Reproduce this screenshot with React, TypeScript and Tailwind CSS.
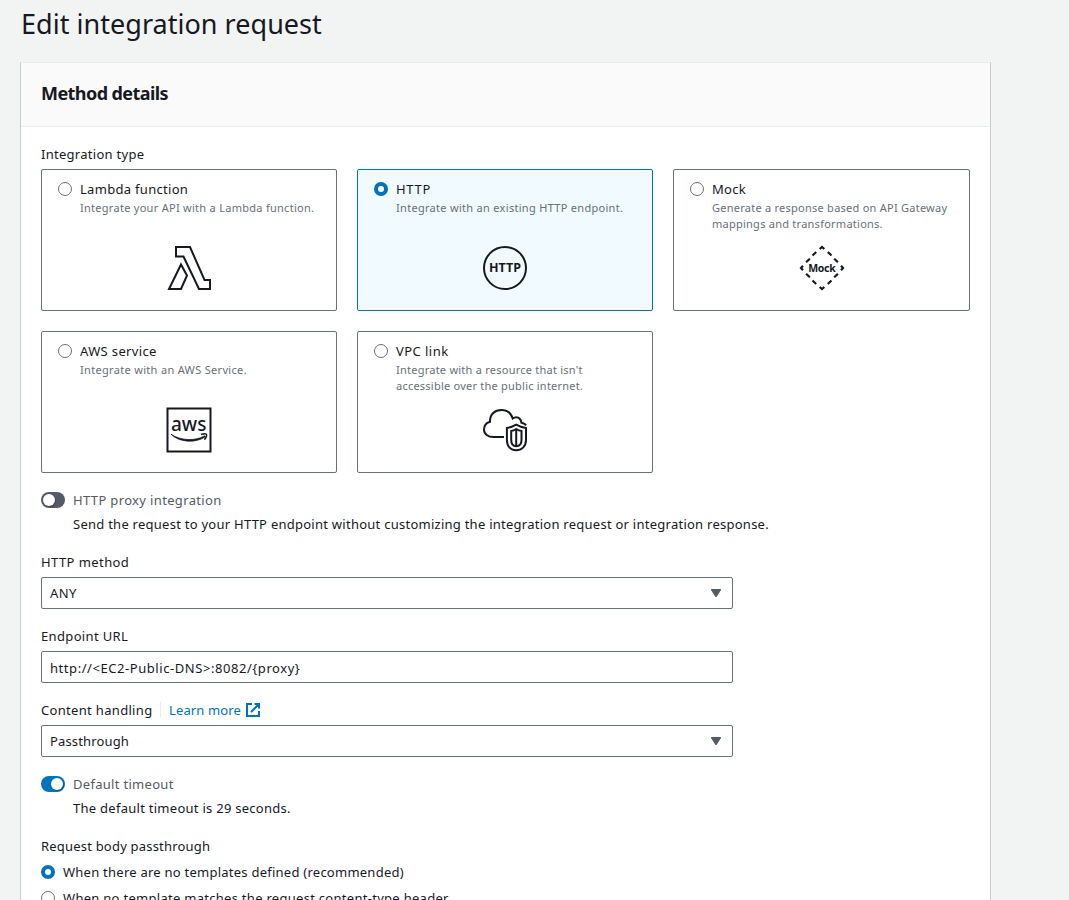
import type { ReactNode } from 'react';

function Radio({ checked = false }: { checked?: boolean }) {
  return (
    <svg className="size-[14px] shrink-0" viewBox="0 0 14 14">
      {checked ? (
        <>
          <circle cx="7" cy="7" r="7" fill="#0073bb" />
          <circle cx="7" cy="7" r="3" fill="#fff" />
        </>
      ) : (
        <circle cx="7" cy="7" r="6.5" fill="#fff" stroke="#687078" />
      )}
    </svg>
  );
}

function Toggle({ on = false }: { on?: boolean }) {
  return (
    <span
      className={`flex h-4 w-6 shrink-0 items-center rounded-full ${
        on ? 'justify-end bg-[#0073bb] pr-[2px]' : 'bg-[#545b64] pl-[2px]'
      }`}
    >
      <span className="size-3 rounded-full bg-white shadow-[1px_1px_1px_rgba(0,0,0,0.25)]" />
    </span>
  );
}

type CardProps = {
  title: string;
  titleClass: string;
  lines: { text: string; className: string }[];
  selected?: boolean;
  children: ReactNode;
};

function Card({ title, titleClass, lines, selected = false, children }: CardProps) {
  return (
    <label
      className={`relative flex h-[142px] flex-col rounded-[2px] border px-4 pt-2 ${
        selected ? 'border-[#0073bb] bg-[#f1faff]' : 'border-[#687078] bg-white'
      }`}
    >
      <span className="flex h-[22px] items-center gap-2">
        <Radio checked={selected} />
        <span className={`whitespace-nowrap text-[13px] ${titleClass}`}>{title}</span>
      </span>
      <span className="flex flex-col pl-[22px] text-[11px] leading-4 text-[#687078]">
        {lines.map((line) => (
          <span key={line.text} className={`whitespace-nowrap ${line.className}`}>
            {line.text}
          </span>
        ))}
      </span>
      <span className="absolute inset-x-0 top-[74px] flex justify-center">{children}</span>
    </label>
  );
}

function LambdaIcon() {
  return (
    <svg className="h-12 w-12" viewBox="0 0 48 48" fill="none" stroke="#16191f" strokeWidth="2">
      <path d="M11 3h14l14.500 33H45v9H34L18.500 12.500H11z" />
      <path d="M16 20.500 4 45h12l6-13.500z" />
    </svg>
  );
}

function HttpIcon() {
  return (
    <svg className="h-12 w-12" viewBox="0 0 48 48">
      <circle cx="24" cy="24" r="21" fill="none" stroke="#16191f" strokeWidth="2" />
      <text x="24" y="28.200" textAnchor="middle" fontSize="11.500" fontWeight="700" fill="#16191f" textLength="32" lengthAdjust="spacingAndGlyphs">
        HTTP
      </text>
    </svg>
  );
}

function MockIcon() {
  return (
    <svg className="h-12 w-12" viewBox="0 0 48 48" fill="none" stroke="#16191f" strokeWidth="2.200">
      <path d="m21.700 5 2.300-2 2.300 2M21.700 43l2.300 2 2.300-2M5 21.700 3 24l2 2.300M43 21.700l2 2.300-2 2.300" />
      <path d="m18.200 8-3.700 3.500M11.800 14.700l-3.700 3.500M29.800 8l3.700 3.500M36.200 14.700l3.700 3.500M8.100 29.800l3.700 3.500M14.500 36.500l3.700 3.500M39.900 29.800l-3.700 3.500M33.500 36.500 29.800 40" />
      <text x="24" y="28" textAnchor="middle" fontSize="10.500" fontWeight="700" fill="#16191f" stroke="none" textLength="27.500">
        Mock
      </text>
    </svg>
  );
}

function AwsIcon() {
  return (
    <svg className="h-12 w-12" viewBox="0 0 48 48" fill="none" stroke="#16191f">
      <path d="M2.500 2.500h43v43h-43z" strokeWidth="2" />
      <text x="23.700" y="24.800" textAnchor="middle" fontSize="20.500" fontWeight="500" fill="#16191f" stroke="none" textLength="35.500" lengthAdjust="spacingAndGlyphs">
        aws
      </text>
      <path d="M6 28.200c9 6.500 25 7.200 33.500 1.600l.8 1C31 37.500 14 36.500 6 28.200z" fill="#16191f" strokeWidth=".7" />
      <path d="M36 28.500c2.500-.9 4.700-.9 5.400-.3.500 1.200-.5 3.700-2 5.500" strokeWidth="1.500" />
    </svg>
  );
}

function VpcIcon() {
  return (
    <svg className="h-12 w-12" viewBox="0 0 48 48" fill="none" stroke="#16191f" strokeWidth="2">
      <path d="M23 31H12.500C7 31 3 28 3 23.500c0-4 2.500-6.800 6-7.800C8.800 8 14 4 20.300 4c5.700 0 9.700 3.300 11.400 8.500 4-3 8-.5 8.800 4.300 1.500.3 3.200 1 4.700 2.500" />
      <path d="M35.200 18.700c-3 1.800-6 2.800-9.300 3.300V34c0 6.500 4 10.300 9.300 10.300s9.800-3.800 9.800-10.300V22c-3.300-.5-6.800-1.500-9.800-3.300z" />
      <path d="M35.200 23c-1.700 1-3.300 1.700-5 2v9c0 4 1.900 6.200 5 6.200s5.300-2.200 5.300-6.200v-9c-2-.3-3.600-1-5.300-2z" />
      <path d="M35.200 23v17" />
    </svg>
  );
}

function Select({ value, className }: { value: string; className: string }) {
  return (
    <div className="flex h-8 w-[692px] items-center justify-between rounded-[2px] border border-[#687078] pl-2 pr-[11px]">
      <span className={className}>{value}</span>
      <svg className="h-2 w-[10px]" viewBox="0 0 10 8">
        <path d="M0 0h10v1L5.500 8h-1L0 1z" fill="#545b64" />
      </svg>
    </div>
  );
}

export default function App() {
  return (
    <div className="h-[900px] overflow-hidden bg-[#f2f3f3] pl-5 font-['Noto_Sans',sans-serif] text-[13px] leading-[22px] text-[#16191f]">
      <h1 className="h-[62px] pl-px pt-[6px] text-[27px] leading-9 tracking-[0.03px]">Edit integration request</h1>
      <main className="h-[920px] w-[971px] border border-x-[#c6cdcf] border-t-[#eaeded] bg-white">
        <header className="flex h-16 items-center border-b border-[#eaeded] bg-[#fafafa] px-5 pb-1">
          <h2 className="text-[18px] font-bold tracking-[-0.57px]">Method details</h2>
        </header>
        <div className="px-5 pt-4">
          <div className="mb-1 tracking-[0.28px]">Integration type</div>
          <div className="grid grid-cols-[296px_296px_297px] gap-5">
            <Card
              title="Lambda function"
              titleClass="tracking-[0.3px]"
              lines={[{ text: 'Integrate your API with a Lambda function.', className: 'tracking-[0.28px]' }]}
            >
              <LambdaIcon />
            </Card>
            <Card
              title="HTTP"
              titleClass="tracking-[0.7px]"
              selected
              lines={[{ text: 'Integrate with an existing HTTP endpoint.', className: 'tracking-[0.3px]' }]}
            >
              <HttpIcon />
            </Card>
            <Card
              title="Mock"
              titleClass="tracking-[0.25px]"
              lines={[
                { text: 'Generate a response based on API Gateway', className: 'tracking-[0.25px]' },
                { text: 'mappings and transformations.', className: 'tracking-[0.25px]' },
              ]}
            >
              <MockIcon />
            </Card>
            <Card
              title="AWS service"
              titleClass="tracking-[0.36px]"
              lines={[{ text: 'Integrate with an AWS Service.', className: 'tracking-[0.32px]' }]}
            >
              <AwsIcon />
            </Card>
            <Card
              title="VPC link"
              titleClass="tracking-[0.45px]"
              lines={[
                { text: "Integrate with a resource that isn't", className: 'tracking-[0.24px]' },
                { text: 'accessible over the public internet.', className: 'tracking-[0.23px]' },
              ]}
            >
              <VpcIcon />
            </Card>
          </div>

          <div className="mt-4 flex items-center gap-2 text-[#545b64]">
            <Toggle />
            <span className="tracking-[0.35px]">HTTP proxy integration</span>
          </div>
          <p className="mt-[2px] pl-8 tracking-[0.255px]">
            Send the request to your HTTP endpoint without customizing the integration request or integration response.
          </p>

          <div className="mb-1 mt-4 tracking-[0.42px]">HTTP method</div>
          <Select value="ANY" className="tracking-[0.4px]" />

          <div className="mb-1 mt-4 tracking-[0.35px]">Endpoint URL</div>
          <div className="flex h-8 w-[692px] items-center rounded-[2px] border border-[#687078] px-2 pt-[2px] tracking-[0.56px]">
            {'http://<EC2-Public-DNS>:8082/{proxy}'}
          </div>

          <div className="mb-1 mt-4 flex items-center">
            <span className="w-[111px] whitespace-nowrap tracking-[0.32px]">Content handling</span>
            <span className="ml-2 h-4 border-l border-[#eaeded]" />
            <a className="ml-2 flex items-center text-[#0073bb]">
              <span className="tracking-[0.12px]">Learn more</span>
              <svg className="ml-[5px] size-[14px]" viewBox="0 0 14 14" fill="none" stroke="#0073bb" strokeWidth="2">
                <path d="M6 1H1v12h12V8M8.500 1H13v4.500M13 1 5 9" />
              </svg>
            </a>
          </div>
          <Select value="Passthrough" className="tracking-[0.15px]" />

          <div className="mt-4 flex items-center gap-2 text-[#545b64]">
            <Toggle on />
            <span className="tracking-[0.3px]">Default timeout</span>
          </div>
          <p className="mt-[2px] pl-8 tracking-[0.27px]">The default timeout is 29 seconds.</p>

          <div className="mb-1 mt-4 tracking-[0.2px]">Request body passthrough</div>
          <div className="flex flex-col gap-1">
            <div className="flex items-center gap-2">
              <Radio checked />
              <span className="tracking-[0.245px]">When there are no templates defined (recommended)</span>
            </div>
            <div className="flex items-center gap-2">
              <Radio />
              <span className="tracking-[0.285px]">When no template matches the request content-type header</span>
            </div>
          </div>
        </div>
      </main>
    </div>
  );
}
